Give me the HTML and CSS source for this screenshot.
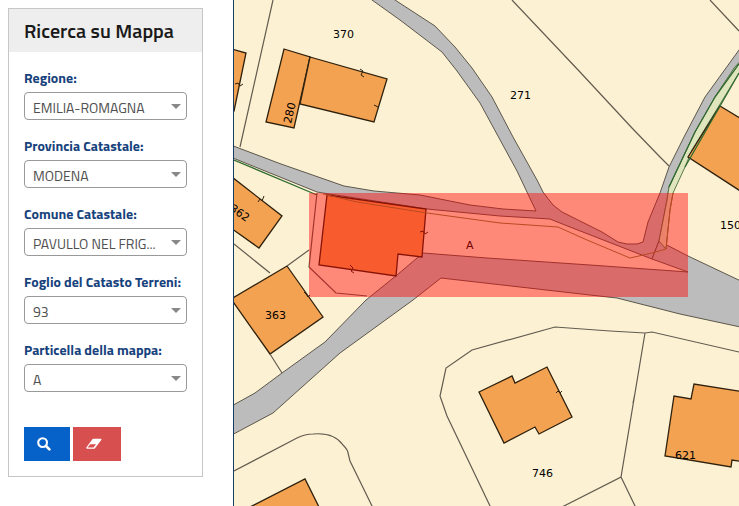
FILE: index.html
```html
<!DOCTYPE html>
<html lang="it">
<head>
<meta charset="utf-8">
<meta name="viewport" content="width=device-width, initial-scale=1">
<title>Ricerca su Mappa</title>
<link rel="stylesheet" href="styles.css">
</head>
<body>
<div class="page">
  <aside class="sidebar">
    <form class="panel">
      <h1 class="panel-title">Ricerca su Mappa</h1>
      <div class="panel-body">
        <div class="field">
          <label for="regione">Regione:</label>
          <div class="select-box"><select id="regione"><option>EMILIA-ROMAGNA</option></select></div>
        </div>
        <div class="field">
          <label for="provincia">Provincia Catastale:</label>
          <div class="select-box"><select id="provincia"><option>MODENA</option></select></div>
        </div>
        <div class="field">
          <label for="comune">Comune Catastale:</label>
          <div class="select-box"><select id="comune"><option>PAVULLO NEL FRIG...</option></select></div>
        </div>
        <div class="field">
          <label for="foglio">Foglio del Catasto Terreni:</label>
          <div class="select-box"><select id="foglio"><option>93</option></select></div>
        </div>
        <div class="field">
          <label for="particella">Particella della mappa:</label>
          <div class="select-box"><select id="particella"><option>A</option></select></div>
        </div>
        <div class="actions">
          <button class="btn btn-search" type="button" aria-label="Cerca">
            <svg width="14" height="14" viewBox="0 0 14 14" aria-hidden="true"><circle cx="5.6" cy="5.6" r="4.4" fill="none" stroke="#fff" stroke-width="2.1"/><path d="M9 9L12.4 12.4" stroke="#fff" stroke-width="2.6" stroke-linecap="round"/></svg>
          </button>
          <button class="btn btn-clear" type="reset" aria-label="Pulisci">
            <svg width="16" height="12" viewBox="0 0 16 12" aria-hidden="true"><path fill="#fff" fill-rule="evenodd" d="M6.6 1.1Q6.9.7 7.5.7H14.6Q16 .8 15.3 2.1L9 10.2Q8.6 10.700 8 10.700H1.100Q-.2 10.600.5 9.300ZM7.500 9.400L10.100 6.200H4.200L1.600 9.400Z"/></svg>
          </button>
        </div>
      </div>
    </form>
  </aside>
  <main class="map">
    <svg class="map-canvas" viewBox="234 0 505 506" preserveAspectRatio="xMinYMin slice" role="img" aria-label="Mappa catastale">
      <g class="road">
        <path d="M228 144L281 164L344 186L374 191L420 195L470 205L503 209L536 211L517 171L480 103L457 71L442 52L400 20L372 0L364 -6H386L395 0L435 26L455 47L472 68L492 97L513 137L537 180L543 192L553 205L562 212L602 232L618 242L627 244L637 244L643 242L648 222L660 193L669 167L685 135L705 97L739 50L745 42V56L735 67L715 97L695 132L677 170L669 187L667 200L659 241L652 259L570 227L550 219L500 216L427 209L323 193L317 192L228 156Z"/>
        <path d="M228 408L255 393L282 373L325 342L366 300L397 275L423 253L487 258L590 265L688 272L652 259L659 241L688 256L745 283V328L680 314L617 298L590 295L441 278L413 300L340 353L273 413L228 437Z"/>
      </g>
      <path class="green-strip" d="M745 58L735 67L715 97L695 132L677 170L669 187L667 200L659 241L666 249L670 210L673 193L685 167L692 150L739 73L745 66Z"/>
      <g class="building">
        <path d="M228 48L246 53L234 111H228Z"/>
        <path d="M284 49L310 57L294 128L266 122Z"/>
        <path d="M310 57L387 79L374 122L300 104Z"/>
        <path d="M228 174L282 216L259 248L228 226Z"/>
        <path d="M287 266L323 317L270 354L231 299Z"/>
        <path d="M327 195L426 209L422 257L398 254L396 276L319 265Z"/>
        <path d="M479 392L512 376L515 383L547 367L572 417L539 434L535 427L504 443Z"/>
        <path d="M745 392L694 384L691 399L674 396L665 456L731 467L732 460L745 462Z"/>
        <path d="M720 106L745 121V194L688 157Z"/>
        <path d="M246 509L305 479L320 509Z"/>
      </g>
      <g class="parcel">
        <path d="M273 0L240 147M512 0L580 72L632 128L660 157L669 166M710 0L739 31"/>
        <path d="M234 244L270 273M287 266L309 250M270 354L282 373"/>
        <path d="M317 193L309 267L336 293L367 296"/>
        <path d="M234 471L297 438Q305 434 313 434Q334 432 343 445Q348 450 348 453L350 461L373 508"/>
        <path d="M491 508L447 416L440 396L446 368L472 350L555 327L610 331L645 333L652 332L739 352M645 333L621 477L562 507M621 477L636 508M635 393L633 403"/>
      </g>
      <path class="green-line" d="M234 160L317 195M739 73L685 167M739 64L715 97L695 132L669 187"/>
      <path class="strip-line" d="M323 194L357 202L427 213L500 223L558 227L587 240L630 258L652 253L666 249L670 210L673 193"/>
      <path class="edge-mark" d="M360 69L363 71L361 75L364 77M374 105L378 107M235 84L238 83L240 86L243 84M258 202L260 199L262 201L264 196M304 292L306 294L308 297L310 295M350 265L353 268L351 271L354 273M420 232L423 231L425 234L428 232M556 393L558 391L560 393L562 391"/>
      <g class="parcel-number">
        <text x="333" y="38">370</text>
        <text x="510" y="99">271</text>
        <text transform="translate(291 124) rotate(-77)">280</text>
        <text transform="translate(229 210) rotate(35)">362</text>
        <text x="265" y="319">363</text>
        <text x="532" y="477">746</text>
        <text x="675" y="459">621</text>
        <text x="720" y="229">150</text>
        <text x="466" y="249">A</text>
      </g>
      <rect class="selection" x="309" y="193" width="379" height="104"/>
    </svg>
  </main>
</div>
</body>
</html>
```
FILE: styles.css
```css
* {
  box-sizing: border-box;
}

body {
  margin: 0;
  background: #fff;
  font-family: "Titillium Web", Roboto, sans-serif;
  font-size: 14px;
}

.page {
  display: flex;
  min-height: 100vh;
}

.sidebar {
  flex: none;
  width: 233px;
  padding: 8px 30px 8px 8px;
}

.panel {
  border: 1px solid #c6c6c6;
}

.panel-title {
  margin: 0;
  padding: 0 15px;
  background: #eee;
  color: #191919;
  font-size: 20px;
  font-weight: 600;
  line-height: 43px;
  white-space: nowrap;
}

.panel-body {
  padding: 16px 15px 15px;
}

.field {
  display: flex;
  flex-direction: column;
  gap: 4px;
  margin-bottom: 16px;
}

.field label {
  color: #17427c;
  font-size: 14px;
  font-weight: 700;
  line-height: 20px;
  white-space: nowrap;
}

.select-box {
  display: grid;
  align-items: center;
}

.select-box select,
.select-box::after {
  grid-area: 1 / 1;
}

.select-box::after {
  content: "";
  justify-self: end;
  margin-right: 6px;
  border: 5px solid transparent;
  border-top-color: #888;
  border-bottom: 0;
  pointer-events: none;
}

.select-box select {
  appearance: none;
  width: 100%;
  height: 28px;
  padding: 2px 20px 0 8px;
  border: 1px solid #999;
  border-radius: 4px;
  background: #fff;
  color: #505050;
  font-family: inherit;
  font-size: 14px;
  font-weight: 400;
}

.actions {
  display: flex;
  gap: 3px;
  padding-top: 19px;
}

.btn {
  display: flex;
  align-items: center;
  height: 34px;
  padding: 0 13px;
  border: 0;
}

.btn-search {
  width: 46px;
  background: #0662c8;
}

.btn-clear {
  width: 48px;
  background: #d7504f;
}

.map {
  flex: 1;
  min-width: 0;
  border-left: 1px solid #173c63;
  background: #fdf1d3;
}

.map-canvas {
  display: block;
  width: 100%;
  height: 100vh;
}

.road {
  fill: #bcbcbc;
  stroke: #5c574c;
}

.building {
  fill: #f3a252;
  stroke: #2e210d;
  stroke-width: 1.3;
}

.parcel {
  fill: none;
  stroke: #625c50;
  stroke-width: 1.2;
}

.green-strip {
  fill: #dfe5bd;
  stroke: #59794b;
}

.green-line {
  fill: none;
  stroke: #2f6b30;
  stroke-width: 1.3;
}

.strip-line {
  fill: none;
  stroke: #87813b;
}

.edge-mark {
  fill: none;
  stroke: #2e210d;
}

.parcel-number {
  fill: #000;
  font-family: "DejaVu Sans", sans-serif;
  font-size: 11px;
}

.selection {
  fill: #f00;
  fill-opacity: 0.43;
}
```
